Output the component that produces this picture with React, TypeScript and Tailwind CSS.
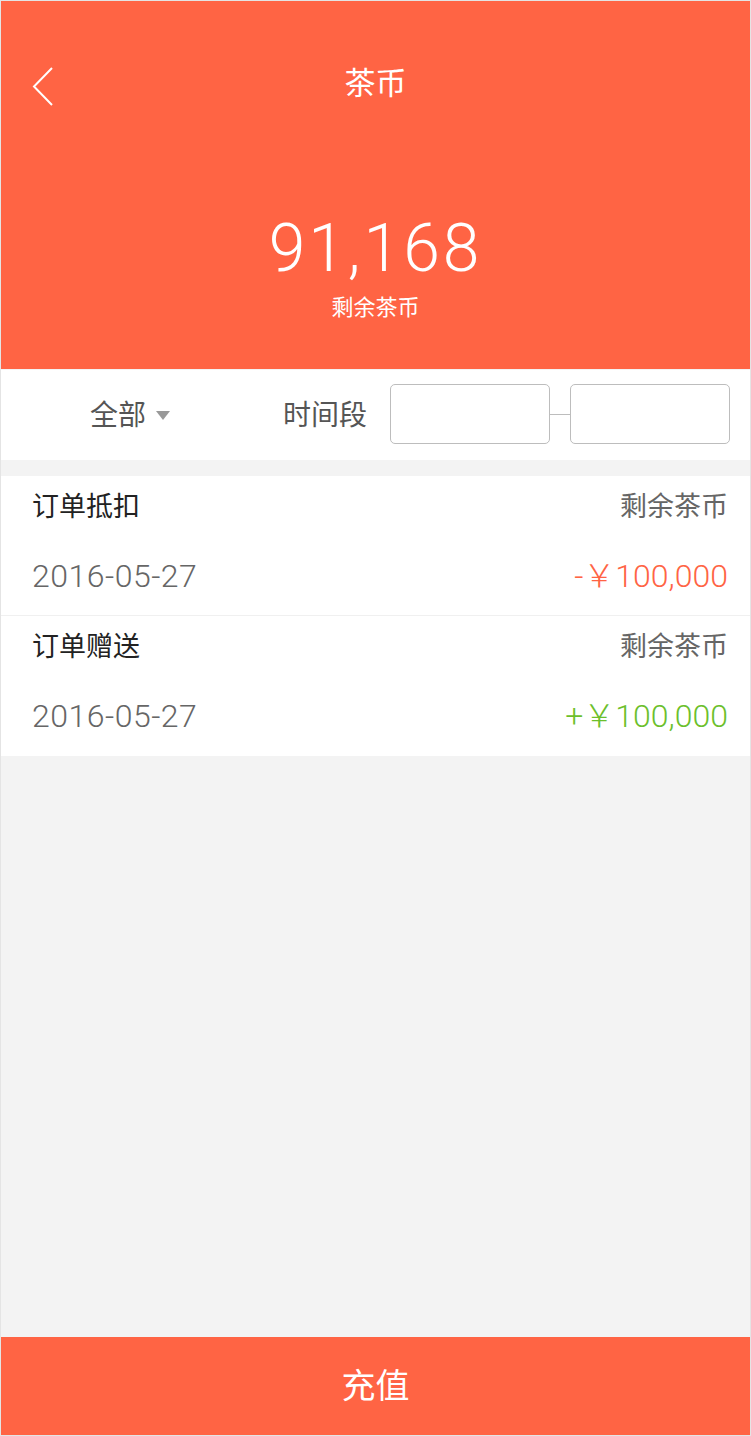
const records = [
  { title: "订单抵扣", date: "2016-05-27", amount: "-￥100,000", color: "text-[#ff6444]" },
  { title: "订单赠送", date: "2016-05-27", amount: "+￥100,000", color: "text-[#6cbf2c]" },
];

const cjk = "font-['Noto_Sans_CJK_SC',sans-serif]";
const num = "font-['Roboto','Noto_Sans_CJK_SC',sans-serif]";

export default function App() {
  return (
    <div className={`w-[751px] h-[1436px] flex flex-col bg-[#f3f3f3] border border-[#e4e4e4] ${cjk}`}>
      {/* header */}
      <div className="bg-[#ff6444] h-[368px] flex flex-col text-white">
        <div className="h-[168px] flex items-center relative">
          <button className="absolute left-[30px] top-[66px] w-[26px] h-[40px]">
            <svg viewBox="0 0 26 40" className="w-[26px] h-[40px]" fill="none" stroke="white" strokeWidth="2">
              <path d="M21 1 L3 19.5 L21 38" />
            </svg>
          </button>
          <div className="w-full text-center text-[31px] leading-none -mt-[9px]">茶币</div>
        </div>
        <div className={`text-center text-[66px] font-light leading-none tracking-[3px] mt-[47px] ${num}`}>91,168</div>
        <div className="text-center text-[22px] leading-none mt-[12px]">剩余茶币</div>
      </div>

      {/* filter bar */}
      <div className="bg-white h-[90px] flex items-center mt-px">
        <div className="w-[282px] flex items-center justify-center gap-[10px] pr-[24px] text-[28px] text-[#555]">
          <span className="-mt-[4px]">全部</span>
          <span className="w-0 h-0 border-l-[7px] border-r-[7px] border-t-[9px] border-l-transparent border-r-transparent border-t-[#999]" />
        </div>
        <span className="text-[28px] text-[#555] w-[107px] -mt-[4px]">时间段</span>
        <div className="flex items-center -mt-[2px]">
          <div className="w-[160px] h-[60px] rounded-[5px] border border-[#bdbdbd]" />
          <div className="w-[20px] h-px bg-[#bdbdbd]" />
          <div className="w-[160px] h-[60px] rounded-[5px] border border-[#bdbdbd]" />
        </div>
      </div>

      {/* records */}
      <div className="mt-[16px] flex flex-col">
        {records.map((r, i) => (
          <div key={i} className={`bg-white h-[140px] pl-[31px] pr-[22px] flex flex-col ${i === 0 ? "border-b border-[#f0f0f0]" : ""}`}>
            <div className="flex justify-between items-center h-[58px]">
              <span className="text-[27px] text-[#222]">{r.title}</span>
              <span className="text-[27px] text-[#666]">剩余茶币</span>
            </div>
            <div className="flex justify-between items-center h-[80px] pt-[4px]">
              <span className={`text-[32px] text-[#666] font-light tracking-[0.5px] ${num}`}>{r.date}</span>
              <span className={`text-[32px] font-light ${r.color} ${num}`}>{r.amount}</span>
            </div>
          </div>
        ))}
      </div>

      <div className="flex-1" />

      {/* recharge button */}
      <button className="h-[98px] bg-[#ff6444] text-white text-[34px] flex items-center justify-center shrink-0">
        <span className="-mt-[5px]">充值</span>
      </button>
    </div>
  );
}
